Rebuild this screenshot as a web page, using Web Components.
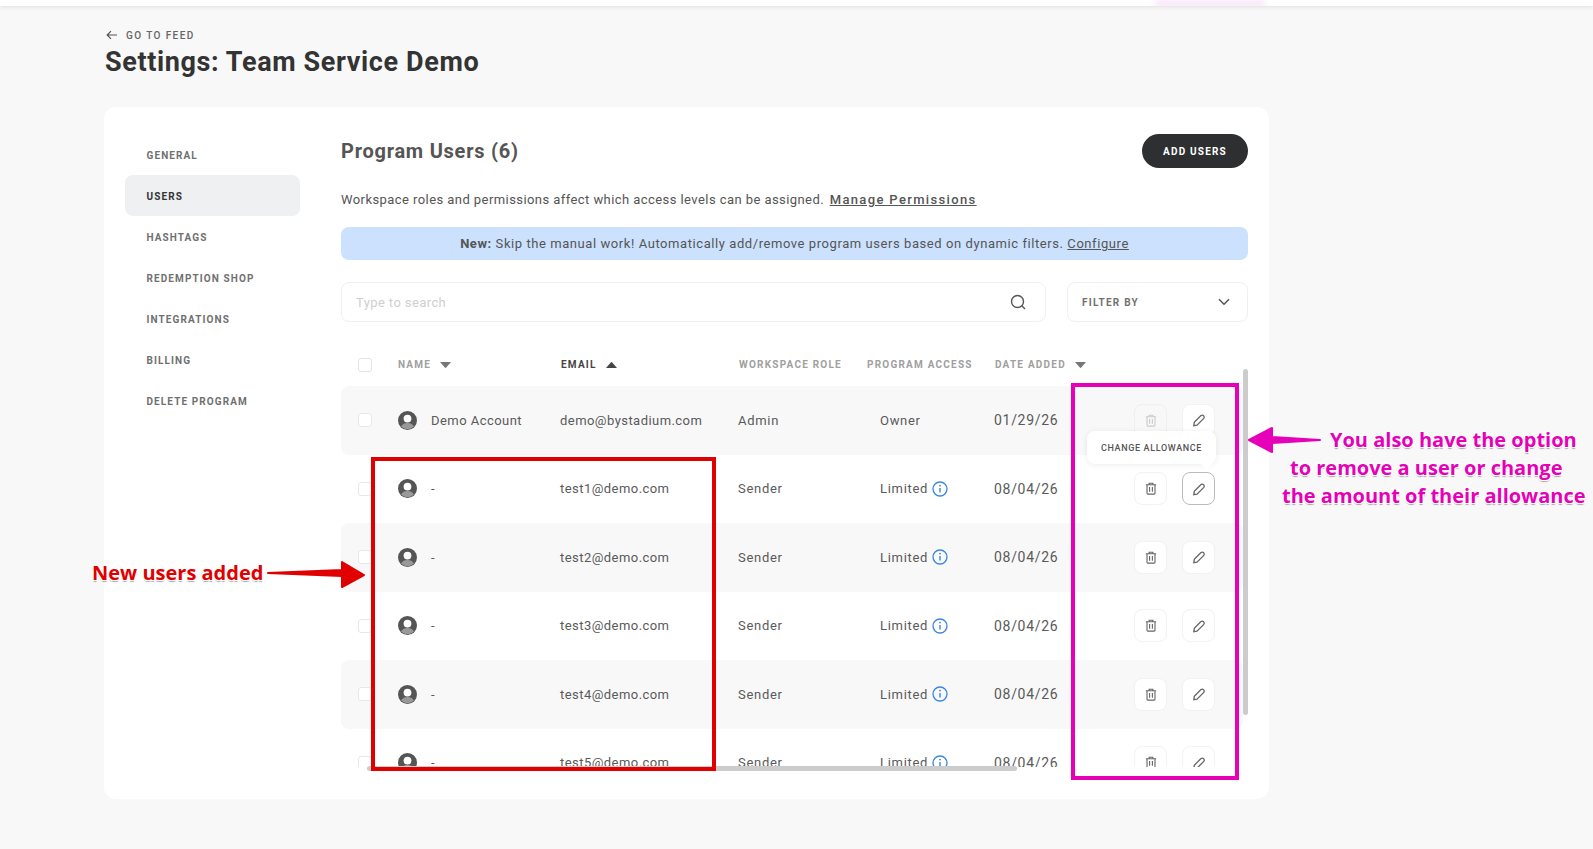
<!DOCTYPE html>
<html lang="en">
<head>
<meta charset="utf-8">
<title>Settings: Team Service Demo</title>
<style>
  html, body { margin: 0; padding: 0; background: #f8f8f8; }
  body { font-family: Roboto, "Liberation Sans", sans-serif; overflow: hidden; }
</style>
</head>
<body>
<settings-app></settings-app>

<script>
const ICONS = {
    back: `<svg width="12" height="10" viewBox="0 0 12 10" fill="none" stroke="#555" stroke-width="1.2"><path d="M11 5H1.5M5 1.2 1.2 5 5 8.8"/></svg>`,
    search: `<svg width="16" height="16" viewBox="0 0 16 16" fill="none" stroke="#555" stroke-width="1.4"><circle cx="7.5" cy="7.5" r="6"/><path d="M11.8 11.8 15 15"/></svg>`,
    chevron: `<svg width="12" height="8" viewBox="0 0 12 8" fill="none" stroke="#555" stroke-width="1.5"><path d="M1 1.2 6 6.2l5-5"/></svg>`,
    down: `<svg width="11" height="6" viewBox="0 0 11 6" fill="#777"><path d="M0 0h11L6.2 5.6a1 1 0 0 1-1.4 0z"/></svg>`,
    up: `<svg width="11" height="6" viewBox="0 0 11 6" fill="#444"><path d="M11 6H0L4.8.4a1 1 0 0 1 1.4 0z"/></svg>`,
    avatar: `<svg width="19" height="19" viewBox="0 0 19 19"><circle cx="9.5" cy="9.5" r="9.5" fill="#555"/><circle cx="9.5" cy="7.6" r="3.9" fill="#fff"/><path d="M3 15.6c1.4-2.5 3.7-3.6 6.5-3.6s5.100 1.100 6.500 3.600a9.500 9.500 0 0 1-13 0z" fill="#999"/></svg>`,
    info: `<svg width="16" height="16" viewBox="0 0 16 16" fill="none"><circle cx="8" cy="8" r="7" stroke="#3b86e0" stroke-width="1.3"/><path d="M8 7v4.600" stroke="#3b86e0" stroke-width="1.4"/><circle cx="8" cy="4.600" r=".9" fill="#3b86e0"/></svg>`,
    trash: `<svg width="12" height="13" viewBox="0 0 12 14" fill="none" stroke="#666" stroke-width="1.2"><path d="M.5 3h11M4 3V1.300h4V3M1.700 3v9.200c0 .5.4.9.9.9h6.800c.5 0 .9-.4.900-.9V3M4.500 5.500v5M7.500 5.500v5"/></svg>`,
    pencil: `<svg width="14" height="14" viewBox="0 0 14 14" fill="none" stroke="#666" stroke-width="1.3"><path d="M2.300 9.300 9 2.600a2 2 0 0 1 2.800 2.800L5 12.100l-3.200.5z"/></svg>`
};

class SettingsApp extends HTMLElement {
    constructor() {
        super();
        this.shadowDOM = this.attachShadow({ mode: "open" });
    }

    connectedCallback() {
        this.shadowDOM.innerHTML = `
        <style>
        :host { display: block; position: relative; width: 1593px; height: 849px; overflow: hidden; color: #555; }
        .topbar { height: 6px; background: #fff; box-shadow: 0 1px 4px rgba(0,0,0,.1); }
        .glow { height: 6px; overflow: hidden; position: relative; }
        .glow i { position: absolute; left: 1155px; top: 1px; width: 110px; height: 5px; background: #f6dcf8; filter: blur(3px); }
        .page { padding: 0 0 0 104px; width: 1165px; }
        </style>
        <div class="topbar"><div class="glow"><i></i></div></div>
        <div class="page">
            <page-header></page-header>
            <settings-card></settings-card>
        </div>
        <note-box color="#e00000" style="left:371px;top:457px;width:337px;height:306px"></note-box>
        <note-box color="#e600b8" style="left:1071px;top:383px;width:160px;height:389px"></note-box>
        <note-text color="#e00000" style="left:92px;top:558px">New users added</note-text>
        <note-text color="#e600b8" style="left:1330px;top:425px">You also have the option</note-text>
        <note-text color="#e600b8" style="left:1290px;top:453px">to remove a user or change</note-text>
        <note-text color="#e600b8" style="left:1282px;top:481px">the amount of their allowance</note-text>
        <note-arrow color="#e00000" style="left:268px;top:560px" points="0,13 74,10 74,2 96,15 74,27 74,16"></note-arrow>
        <note-arrow color="#e600b8" style="left:1249px;top:426px" points="71,14 23,11 23,2 0,14 23,26 23,17"></note-arrow>
        `;
    }
}

class PageHeader extends HTMLElement {
    constructor() {
        super();
        this.shadowDOM = this.attachShadow({ mode: "open" });
    }

    connectedCallback() {
        this.shadowDOM.innerHTML = `
        <style>
        :host { display: block; height: 101px; }
        .back { display: flex; align-items: center; gap: 8px; padding: 22px 0 0 2px; height: 14px; font-size: 10px; font-weight: 500; letter-spacing: 1.4px; color: #666; }
        h1 { margin: 3px 0 0 1px; font-size: 27px; line-height: 34px; font-weight: 700; color: #333; letter-spacing: .62px; }
        </style>
        <div class="back">${ICONS.back}<span>GO TO FEED</span></div>
        <h1>Settings: Team Service Demo</h1>
        `;
    }
}

class SettingsCard extends HTMLElement {
    constructor() {
        super();
        this.shadowDOM = this.attachShadow({ mode: "open" });
    }

    connectedCallback() {
        this.shadowDOM.innerHTML = `
        <style>
        :host { display: flex; box-sizing: border-box; width: 1165px; height: 692px; padding: 27px 21px 0; gap: 41px; background: #fff; border-radius: 12px; }
        </style>
        <side-nav></side-nav>
        <users-panel></users-panel>
        `;
    }
}

class SideNav extends HTMLElement {
    constructor() {
        super();
        this.shadowDOM = this.attachShadow({ mode: "open" });
    }

    connectedCallback() {
        const items = ["General", "Users", "Hashtags", "Redemption Shop", "Integrations", "Billing", "Delete Program"];
        this.shadowDOM.innerHTML = `
        <style>
        :host { display: block; width: 175px; flex: none; }
        div { display: flex; align-items: center; height: 41px; padding: 1px 0 0 21.500px; box-sizing: border-box; border-radius: 8px; font-size: 10px; font-weight: 700; letter-spacing: 1.1px; text-transform: uppercase; color: #707070; }
        .on { background: #eff0f1; color: #333; }
        </style>
        ${items.map((item) => `<div class="${item === "Users" ? "on" : ""}">${item}</div>`).join("")}
        `;
    }
}

class UsersPanel extends HTMLElement {
    constructor() {
        super();
        this.shadowDOM = this.attachShadow({ mode: "open" });
    }

    connectedCallback() {
        this.shadowDOM.innerHTML = `
        <style>
        :host { display: block; width: 907px; flex: none; }
        .head { display: flex; justify-content: space-between; align-items: center; height: 34px; }
        h2 { margin: 0; font-size: 20px; font-weight: 700; color: #555; letter-spacing: .75px; }
        .add { display: flex; align-items: center; justify-content: center; width: 106px; height: 34px; border-radius: 17px; background: #2e2f31; color: #fff; font-size: 10px; font-weight: 700; letter-spacing: 1.2px; }
        p { margin: 23px 0 0; height: 17px; line-height: 17px; font-size: 13px; letter-spacing: .43px; color: #555; }
        p a { margin-left: 2px; font-weight: 500; letter-spacing: 1.35px; text-decoration: underline; color: #555; }
        .banner { display: flex; align-items: center; justify-content: center; height: 33px; margin-top: 19px; border-radius: 8px; background: #cbe1fd; font-size: 13px; letter-spacing: .57px; white-space: pre; color: #555; }
        .banner a { text-decoration: underline; color: #555; }
        .tools { display: flex; gap: 21px; margin-top: 22px; }
        .box { box-sizing: border-box; display: flex; align-items: center; justify-content: space-between; height: 40px; border: 1px solid #f0f0f0; border-radius: 8px; padding: 0 14px; }
        .search { flex: 1; font-size: 13px; letter-spacing: .4px; color: #cfcfcf; padding-right: 19px; }
        .filter { width: 181px; flex: none; font-size: 10px; font-weight: 700; letter-spacing: 1.25px; color: #707070; padding-right: 17px; }
        .search svg, .filter svg { display: block; }
        </style>
        <div class="head"><h2>Program Users (6)</h2><div class="add">ADD USERS</div></div>
        <p>Workspace roles and permissions affect which access levels can be assigned. <a>Manage Permissions</a></p>
        <div class="banner"><b>New:</b> Skip the manual work! Automatically add/remove program users based on dynamic filters. <a>Configure</a></div>
        <div class="tools">
            <div class="box search"><span>Type to search</span>${ICONS.search}</div>
            <div class="box filter"><span>FILTER BY</span>${ICONS.chevron}</div>
        </div>
        <users-table></users-table>
        `;
    }
}

class UsersTable extends HTMLElement {
    constructor() {
        super();
        this.shadowDOM = this.attachShadow({ mode: "open" });
    }

    connectedCallback() {
        const users = [
            { name: "Demo Account", email: "demo@bystadium.com", role: "Admin", access: "Owner", date: "01/29/26" },
            { name: "-", email: "test1@demo.com", role: "Sender", access: "Limited", date: "08/04/26" },
            { name: "-", email: "test2@demo.com", role: "Sender", access: "Limited", date: "08/04/26" },
            { name: "-", email: "test3@demo.com", role: "Sender", access: "Limited", date: "08/04/26" },
            { name: "-", email: "test4@demo.com", role: "Sender", access: "Limited", date: "08/04/26" },
            { name: "-", email: "test5@demo.com", role: "Sender", access: "Limited", date: "08/04/26" }
        ];
        this.shadowDOM.innerHTML = `
        <style>
        :host { display: block; position: relative; height: 449px; overflow: hidden; }
        .cols { display: grid; grid-template-columns: 57px 163px 178px 128px 128px 1fr; align-items: center; height: 64px; box-sizing: border-box; padding-top: 21px; font-size: 10px; font-weight: 700; letter-spacing: 1.22px; color: #a0a0a0; }
        .cols span { display: flex; align-items: center; gap: 9px; }
        .cols .dark { color: #444; }
        .check { box-sizing: border-box; width: 14px; height: 14px; margin-left: 17px; border: 1px solid #e4e4e4; border-radius: 3px; background: #fff; }
        .rows { height: 381px; overflow: hidden; }
        .tip { position: absolute; left: 746px; top: 109px; box-sizing: border-box; width: 129px; height: 33px; display: flex; align-items: center; justify-content: center; background: #fff; border-radius: 8px; box-shadow: 0 1px 6px rgba(0,0,0,.08); font-size: 9px; font-weight: 500; letter-spacing: .65px; color: #555; }
        .tip::after { content: ""; position: absolute; right: 5px; bottom: -4px; width: 9px; height: 9px; background: #fff; transform: rotate(45deg); }
        .vbar { position: absolute; right: 0; top: 47px; width: 5px; height: 346px; border-radius: 3px; background: #ccc; }
        .hbar { position: absolute; left: 26px; bottom: 0; width: 650px; height: 5px; border-radius: 3px; background: #ccc; }
        </style>
        <div class="cols">
            <div class="check"></div>
            <span>NAME ${ICONS.down}</span>
            <span class="dark">EMAIL ${ICONS.up}</span>
            <span>WORKSPACE ROLE</span>
            <span>PROGRAM ACCESS</span>
            <span>DATE ADDED ${ICONS.down}</span>
        </div>
        <div class="rows"></div>
        <div class="tip">CHANGE ALLOWANCE</div>
        <div class="vbar"></div>
        <div class="hbar"></div>
        `;
        const rows = this.shadowDOM.querySelector(".rows");
        users.forEach((user, i) => {
            const row = document.createElement("user-row");
            row.user = user;
            if (i % 2 === 0) row.setAttribute("striped", "");
            if (i === 0) row.setAttribute("owner", "");
            if (i === 1) row.setAttribute("hovered", "");
            rows.appendChild(row);
        });
    }
}

class UserRow extends HTMLElement {
    constructor() {
        super();
        this.shadowDOM = this.attachShadow({ mode: "open" });
    }

    set user(user) {
        this._user = user;
        this.render();
    }

    render() {
        const u = this._user;
        const info = u.access === "Limited" ? ICONS.info : "";
        this.shadowDOM.innerHTML = `
        <style>
        :host { display: grid; grid-template-columns: 57px 33px 129px 178px 142px 114px 140px 33px 48px; align-items: center; box-sizing: border-box; width: 902px; height: 68.5px; border-radius: 8px; font-size: 13px; letter-spacing: .45px; color: #5a5a5a; }
        :host([striped]) { background: #f8f8f8; }
        .check { box-sizing: border-box; width: 14px; height: 14px; margin-left: 17px; border: 1px solid #e8e8e8; border-radius: 3px; background: #fff; }
        .avatar { display: flex; }
        .role, .access { letter-spacing: .7px; }
        .date { font-size: 14px; letter-spacing: .7px; }
        .access { display: flex; align-items: center; gap: 4px; }
        .access svg, .btn svg { display: block; }
        .btn { box-sizing: border-box; display: flex; align-items: center; justify-content: center; width: 33px; height: 33px; border: 1px solid #f2f2f2; border-radius: 8px; background: #fff; }
        .pen { margin-left: 15px; }
        :host([owner]) .del { background: #f8f8f8; border-color: #f0f0f0; }
        :host([owner]) .del svg { opacity: .3; }
        :host([hovered]) .pen { border-color: #bbb; }
        </style>
        <div class="check"></div>
        <div class="avatar">${ICONS.avatar}</div>
        <div>${u.name}</div>
        <div>${u.email}</div>
        <div class="role">${u.role}</div>
        <div class="access">${u.access}${info}</div>
        <div class="date">${u.date}</div>
        <div class="btn del">${ICONS.trash}</div>
        <div class="btn pen">${ICONS.pencil}</div>
        `;
    }
}

// annotations drawn over the screenshot
class NoteBox extends HTMLElement {
    constructor() {
        super();
        this.shadowDOM = this.attachShadow({ mode: "open" });
    }

    connectedCallback() {
        this.shadowDOM.innerHTML = `
        <style>
        :host { display: block; position: absolute; border: 4px solid ${this.getAttribute("color")}; pointer-events: none; }
        </style>
        `;
    }
}

class NoteText extends HTMLElement {
    constructor() {
        super();
        this.shadowDOM = this.attachShadow({ mode: "open" });
    }

    connectedCallback() {
        this.shadowDOM.innerHTML = `
        <style>
        :host {
            display: block; position: absolute; white-space: nowrap;
            font: 700 20px/30px "Open Sans", sans-serif; color: ${this.getAttribute("color")};
            text-shadow: -1px -1px 0 #fff, 1px -1px 0 #fff, -1px 1px 0 #fff, 1px 1px 0 #fff, 0 -1px 0 #fff, -1px 0 0 #fff, 1px 0 0 #fff, 0 2px 1px #aaa;
        }
        </style>
        <slot></slot>
        `;
    }
}

class NoteArrow extends HTMLElement {
    constructor() {
        super();
        this.shadowDOM = this.attachShadow({ mode: "open" });
    }

    connectedCallback() {
        const color = this.getAttribute("color");
        this.shadowDOM.innerHTML = `
        <style>
        :host { display: block; position: absolute; width: 100px; height: 30px; }
        svg { display: block; overflow: visible; }
        </style>
        <svg width="100" height="30"><polygon points="${this.getAttribute("points")}" fill="${color}" stroke="${color}" stroke-width="2" stroke-linejoin="round"/></svg>
        `;
    }
}

customElements.define("user-row", UserRow);
customElements.define("users-table", UsersTable);
customElements.define("users-panel", UsersPanel);
customElements.define("side-nav", SideNav);
customElements.define("settings-card", SettingsCard);
customElements.define("page-header", PageHeader);
customElements.define("note-box", NoteBox);
customElements.define("note-text", NoteText);
customElements.define("note-arrow", NoteArrow);
customElements.define("settings-app", SettingsApp);
</script>
</body>
</html>
